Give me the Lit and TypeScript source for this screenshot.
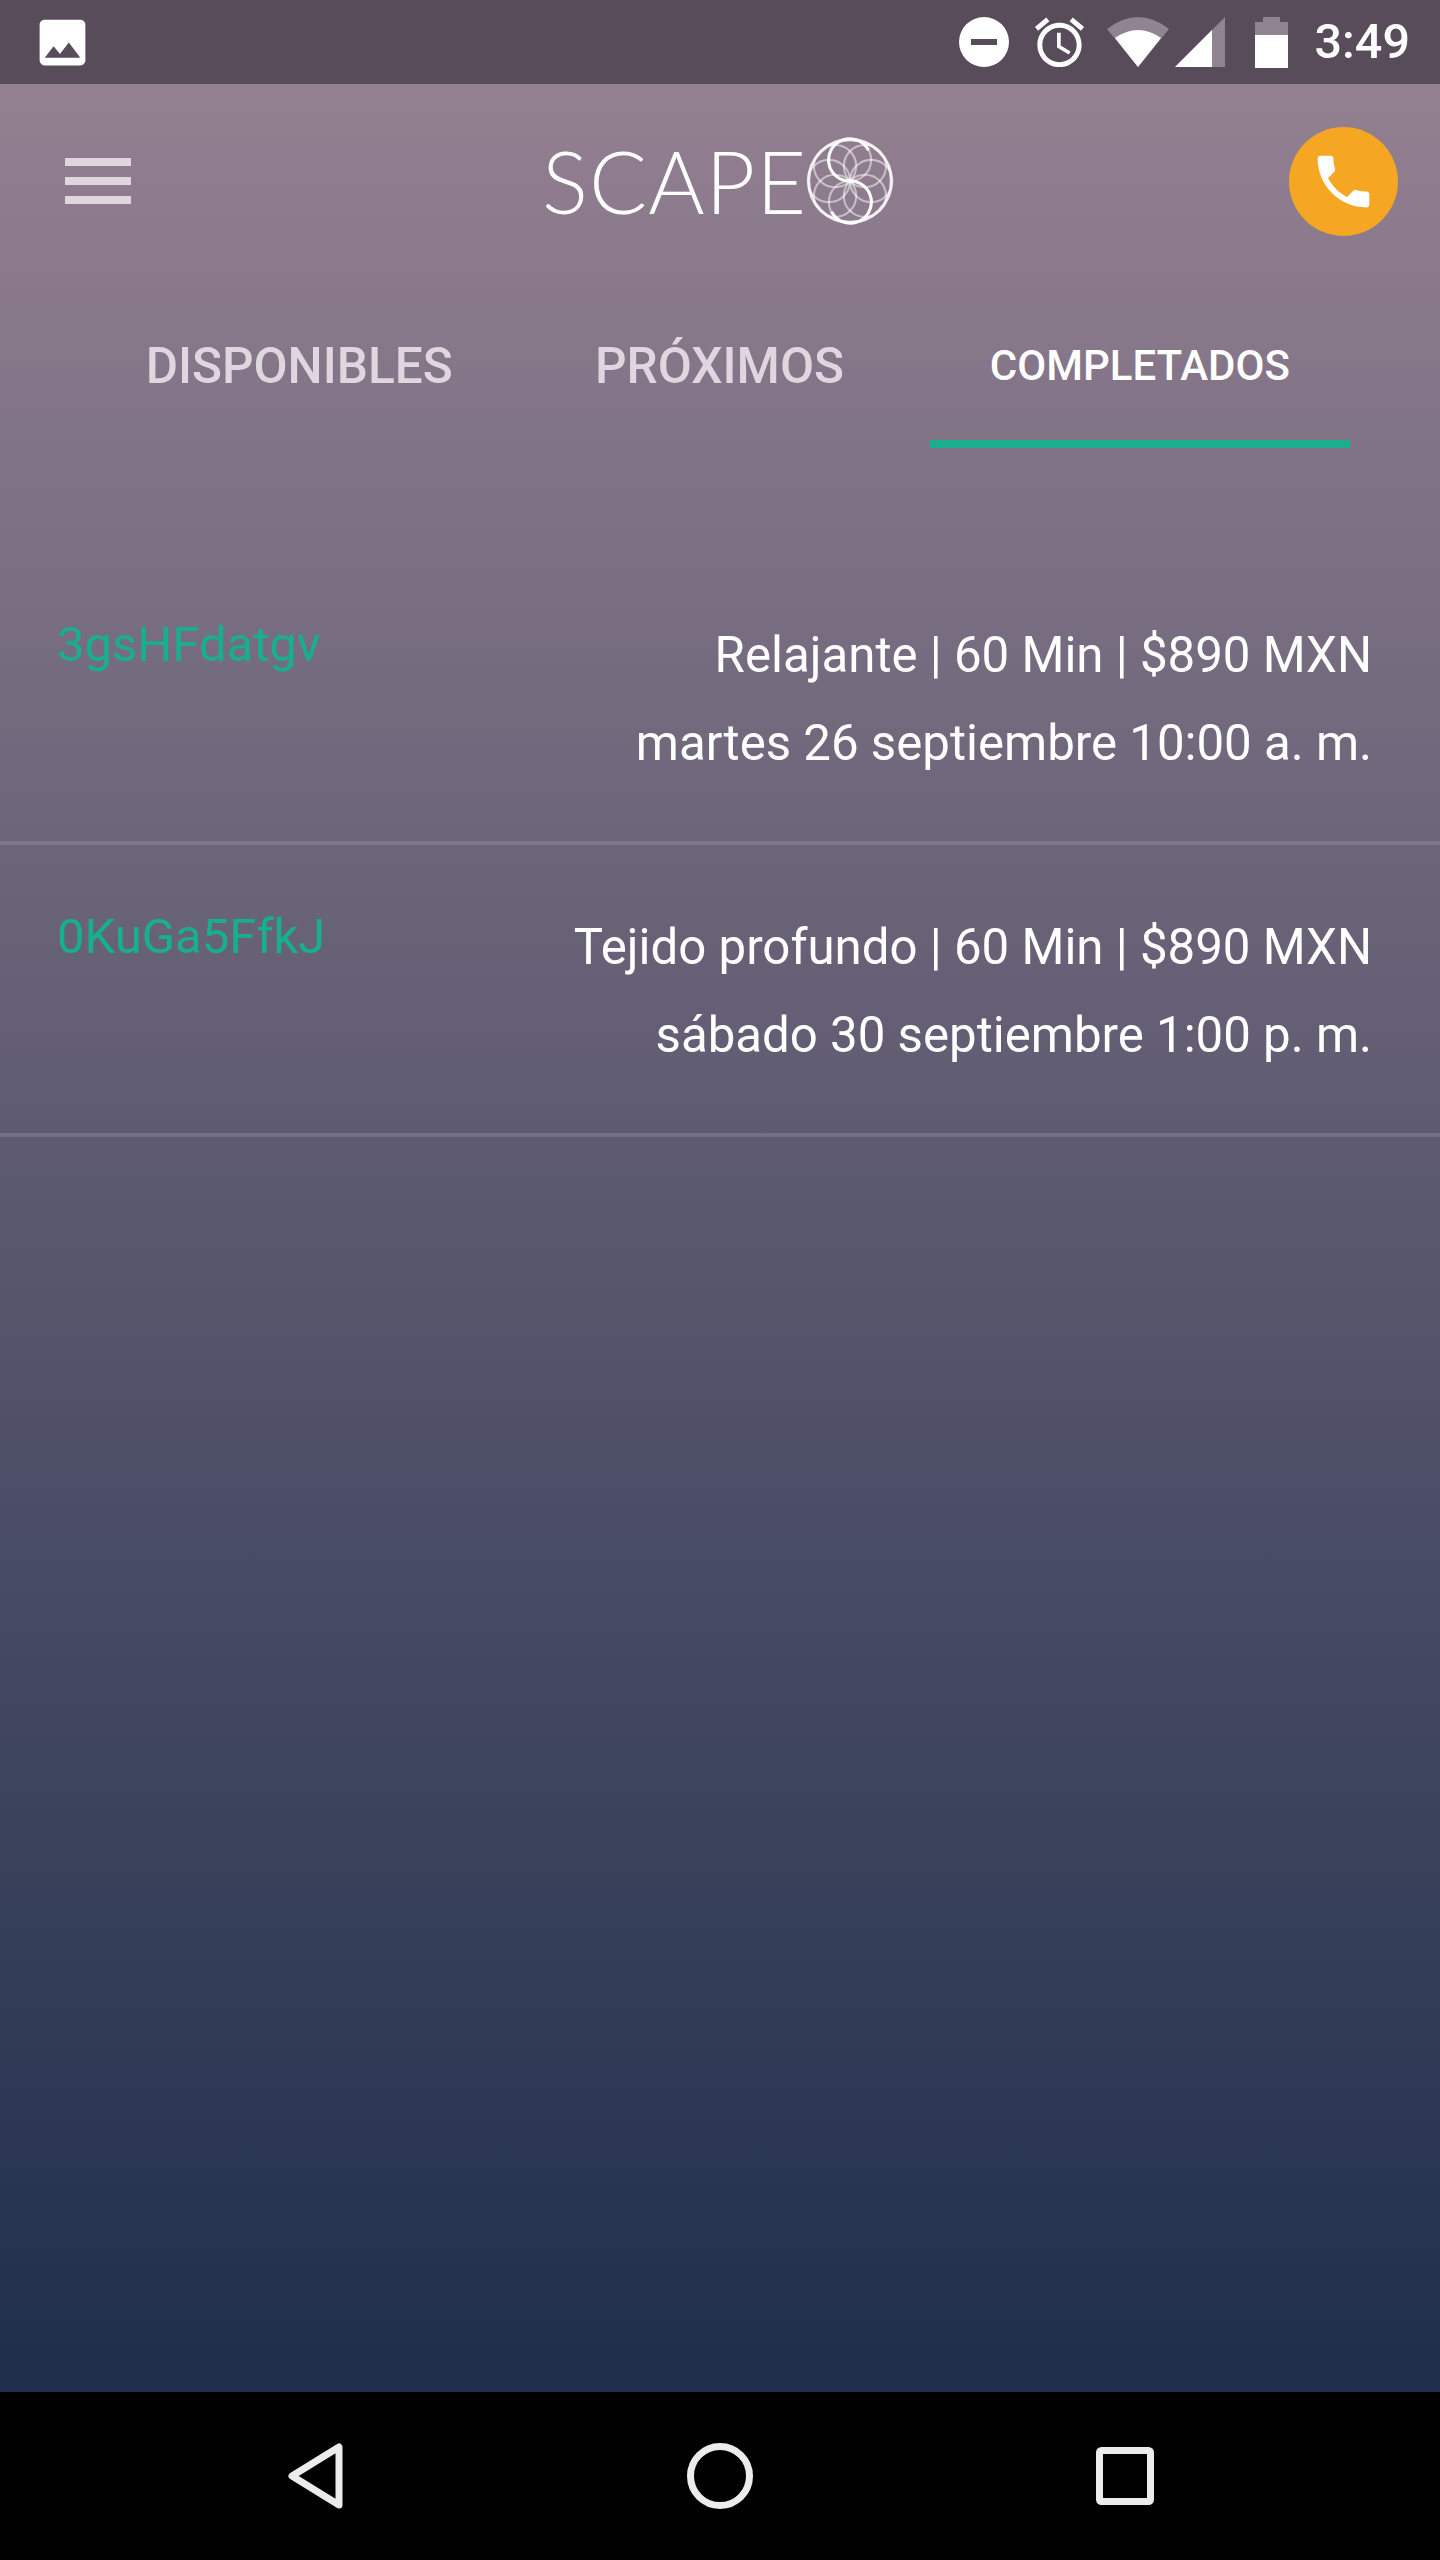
import { LitElement, html, css, svg } from 'lit';
import { customElement } from 'lit/decorators.js';

interface Booking {
  code: string;
  summary: string;
  when: string;
}

const bookings: Booking[] = [
  { code: '3gsHFdatgv', summary: 'Relajante | 60 Min | $890 MXN', when: 'martes 26 septiembre 10:00 a. m.' },
  { code: '0KuGa5FfkJ', summary: 'Tejido profundo | 60 Min | $890 MXN', when: 'sábado 30 septiembre 1:00 p. m.' },
];

const tabs = ['DISPONIBLES', 'PRÓXIMOS', 'COMPLETADOS'];
const petalAngles = [0, 45, 90, 135, 180, 225, 270, 315];

@customElement('app-root')
export class AppRoot extends LitElement {
  static styles = css`
    :host {
      display: block;
      width: 1440px;
      height: 2560px;
      font-family: Roboto, 'Noto Sans', sans-serif;
      color: #fff;
    }
    .screen {
      display: flex;
      flex-direction: column;
      height: 100%;
    }

    /* status bar */
    .status {
      flex: none;
      height: 84px;
      display: flex;
      align-items: center;
      padding: 0 30px 0 32px;
      background: #584c5a;
    }
    .status svg {
      display: block;
      flex: none;
    }
    .status-image { width: 61px; height: 61px; margin-right: auto; }
    .status-dnd { width: 50px; height: 50px; }
    .status-alarm { width: 59px; height: 59px; margin-left: 21px; }
    .status-wifi { width: 62px; height: 50px; margin-left: 18px; }
    .status-signal { width: 50px; height: 50px; margin-left: 6px; }
    .status-battery { width: 33px; height: 51px; margin-left: 30px; }
    .status-time {
      margin-left: 27px;
      font-size: 48.5px;
      font-weight: 500;
      line-height: 84px;
    }

    /* gradient area */
    .main {
      flex: 1;
      min-height: 0;
      background: linear-gradient(180deg, #938091 0%, #1e2e4b 100%);
    }
    .header {
      height: 194px;
      display: flex;
      align-items: center;
      padding: 0 42px 0 65px;
    }
    .menu {
      flex: none;
      width: 66px;
      display: flex;
      flex-direction: column;
      gap: 11px;
    }
    .menu span {
      height: 8px;
      background: #e0d6e0;
    }
    .logo {
      margin-left: 411px;
      display: flex;
      align-items: center;
    }
    .logo-word {
      font-family: Lato, sans-serif;
      font-weight: 300;
      font-size: 86px;
      line-height: 84px;
      width: 264px;
      white-space: nowrap;
      letter-spacing: 1px;
      color: #fff;
    }
    .logo svg {
      display: block;
      width: 88px;
      height: 88px;
    }
    .call {
      margin-left: auto;
      width: 109px;
      height: 109px;
      border-radius: 50%;
      background: #f5a623;
      display: flex;
      align-items: center;
      justify-content: center;
    }
    .call svg {
      width: 69px;
      height: 69px;
      fill: #fff;
    }

    .tabs {
      display: grid;
      grid-template-columns: repeat(3, 1fr);
      padding: 0 90px 0 89px;
      height: 170px;
    }
    .tab {
      display: flex;
      align-items: center;
      justify-content: center;
      padding-top: 14px;
      font-size: 49.5px;
      font-weight: 500;
      color: #dfd6df;
      border-bottom: 8px solid transparent;
    }
    .tab.active {
      padding-top: 12px;
      font-size: 42px;
      color: #fff;
      border-bottom-color: #1aae8e;
    }

    .list {
      margin-top: 105px;
    }
    .row {
      display: flex;
      justify-content: space-between;
      padding: 0 68px 0 57px;
      border-bottom: 4px solid rgba(255, 255, 255, 0.13);
      height: 292px;
      box-sizing: border-box;
    }
    .code {
      padding-top: 56px;
      font-size: 49px;
      font-weight: 400;
      line-height: 71px;
      color: #17b08f;
    }
    .detail {
      padding-top: 58px;
      text-align: right;
      font-size: 49.2px;
      line-height: 88px;
      color: #fff;
    }

    /* navigation bar */
    .nav {
      flex: none;
      height: 168px;
      background: #000;
      display: flex;
      align-items: center;
      padding-left: 288px;
    }
    .nav svg {
      display: block;
      flex: none;
      fill: none;
      stroke: #ececec;
      stroke-width: 7;
      stroke-linejoin: round;
    }
    .nav-back { width: 55px; height: 66px; }
    .nav-home { width: 66px; height: 66px; margin-left: 344px; }
    .nav-recent { width: 58px; height: 58px; margin-left: 343px; }
  `;

  private renderFlower() {
    return html`<svg viewBox="0 0 100 100" fill="none" stroke="#fff">
      ${petalAngles.map(a => svg`
        <circle cx="50" cy="26" r="24" stroke-width="2.4" stroke-opacity="0.5" transform="rotate(${a} 50 50)"></circle>
      `)}
      <circle cx="50" cy="50" r="47" stroke-width="3.5" stroke-opacity="0.85"></circle>
      <path d="M50 50A24 24 0 1 1 71 15" stroke-width="3.5"></path>
      <path d="M50 50A24 24 0 1 1 29 85" stroke-width="3.5"></path>
    </svg>`;
  }

  render() {
    return html`
      <div class="screen">
        <div class="status">
          <svg class="status-image" viewBox="0 0 24 24" fill="#fff"><path d="M21 19V5c0-1.1-.9-2-2-2H5c-1.1 0-2 .9-2 2v14c0 1.1.9 2 2 2h14c1.1 0 2-.9 2-2zM8.5 13.5l2.5 3.01L14.5 12l4.5 6H5l3.5-4.5z"></path></svg>
          <svg class="status-dnd" viewBox="0 0 50 50"><path fill="#fff" fill-rule="evenodd" d="M25 0a25 25 0 1 0 0 50a25 25 0 1 0 0-50zM12 22h26v6H12z"></path></svg>
          <svg class="status-alarm" viewBox="0 0 24 24" fill="#fff"><path d="M22 5.72l-4.6-3.86-1.29 1.53 4.6 3.86L22 5.72zM7.88 3.39L6.6 1.86 2 5.71l1.29 1.53 4.59-3.85zM12.5 8H11v6l4.75 2.85.75-1.23-4-2.37V8zM12 4c-4.97 0-9 4.03-9 9s4.03 9 9 9 9-4.03 9-9-4.03-9-9-9zm0 16c-3.87 0-7-3.13-7-7s3.13-7 7-7 7 3.13 7 7-3.13 7-7 7z"></path></svg>
          <svg class="status-wifi" viewBox="0 0 62 50">
            <path fill="#8f8490" d="M31 50L0 12Q31 -12 62 12z"></path>
            <path fill="#fff" d="M31 50L8 21Q31 5 54 21z"></path>
          </svg>
          <svg class="status-signal" viewBox="0 0 50 50">
            <path fill="#8f8490" d="M50 0V50H0z"></path>
            <path fill="#fff" d="M37 13V50H0z"></path>
          </svg>
          <svg class="status-battery" viewBox="0 0 33 51">
            <path fill="#8f8490" d="M8 0H25V5H33V18H0V5H8z"></path>
            <path fill="#fff" d="M0 18H33V51H0z"></path>
          </svg>
          <span class="status-time">3:49</span>
        </div>

        <div class="main">
          <div class="header">
            <div class="menu"><span></span><span></span><span></span></div>
            <div class="logo">
              <span class="logo-word">SCAPE</span>
              ${this.renderFlower()}
            </div>
            <div class="call">
              <svg viewBox="0 0 24 24"><path d="M6.62 10.79c1.44 2.83 3.76 5.14 6.59 6.59l2.2-2.2c.27-.27.67-.36 1.02-.24 1.12.37 2.33.57 3.57.57.55 0 1 .45 1 1V20c0 .55-.45 1-1 1-9.39 0-17-7.61-17-17 0-.55.45-1 1-1h3.5c.55 0 1 .45 1 1 0 1.25.2 2.45.57 3.57.11.35.03.74-.25 1.02l-2.2 2.2z"></path></svg>
            </div>
          </div>

          <div class="tabs">
            ${tabs.map((t, i) => html`<div class="tab ${i === 2 ? 'active' : ''}">${t}</div>`)}
          </div>

          <div class="list">
            ${bookings.map(b => html`
              <div class="row">
                <div class="code">${b.code}</div>
                <div class="detail">${b.summary}<br />${b.when}</div>
              </div>
            `)}
          </div>
        </div>

        <div class="nav">
          <svg class="nav-back" viewBox="0 0 55 66"><path d="M4 33L51 4V62z"></path></svg>
          <svg class="nav-home" viewBox="0 0 66 66"><circle cx="33" cy="33" r="29.5"></circle></svg>
          <svg class="nav-recent" viewBox="0 0 58 58"><rect x="3.5" y="3.5" width="51" height="51" rx="2"></rect></svg>
        </div>
      </div>
    `;
  }
}
